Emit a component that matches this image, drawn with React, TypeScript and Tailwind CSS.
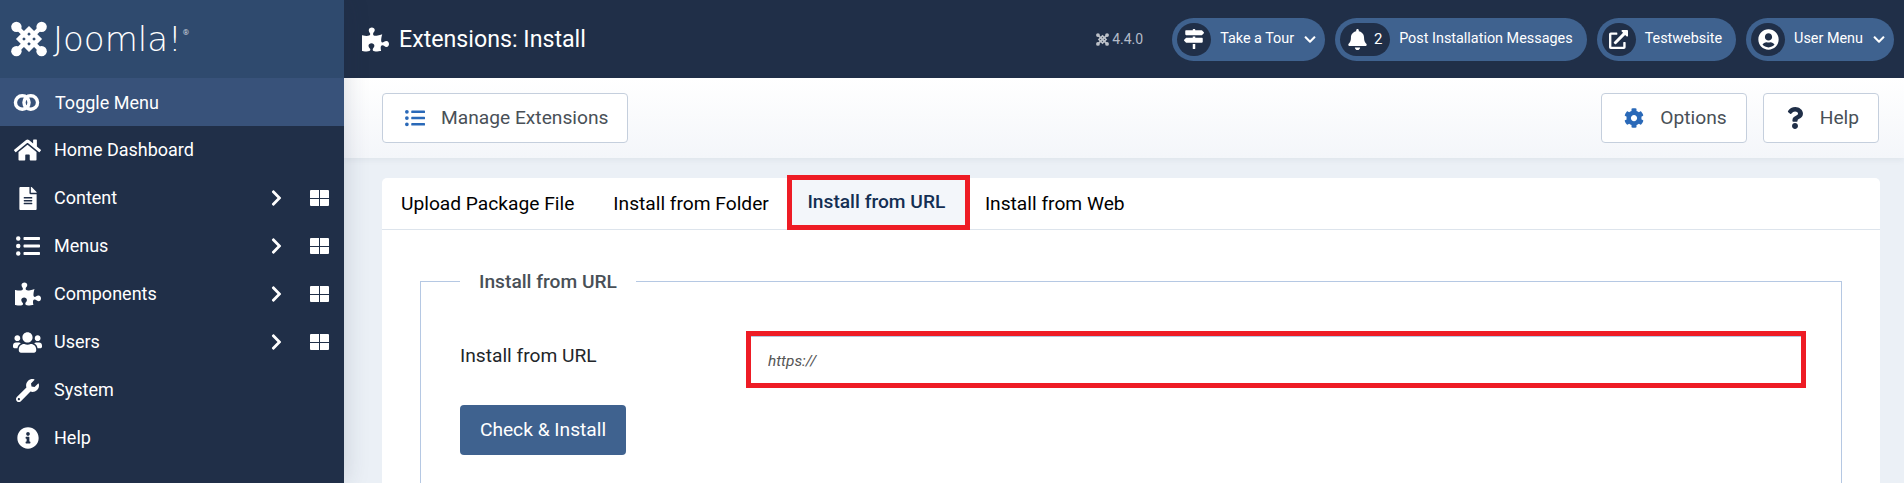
import { ReactNode } from "react";
import {
  FaBell,
  FaChevronDown,
  FaChevronRight,
  FaCog,
  FaExternalLinkAlt,
  FaFileAlt,
  FaHome,
  FaInfoCircle,
  FaListUl,
  FaMapSigns,
  FaPuzzlePiece,
  FaQuestion,
  FaUserCircle,
  FaUsers,
  FaWrench,
} from "react-icons/fa";

function JoomlaMark({ className }: { className?: string }) {
  return (
    <svg viewBox="0 0 40 40" className={className} fill="white">
      <circle cx="6" cy="6.5" r="5.8" />
      <circle cx="34" cy="6.5" r="5.8" />
      <circle cx="6" cy="33.5" r="5.8" />
      <circle cx="34" cy="33.5" r="5.8" />
      <g fill="none" stroke="white" strokeWidth="5">
        <path d="M20 9 L31 20 L20 31 L9 20 Z" />
        <path d="M6 6.5 L34 33.5" />
        <path d="M34 6.5 L6 33.5" />
      </g>
    </svg>
  );
}

function ToggleIcon() {
  return (
    <svg viewBox="0 0 28 18" className="w-[27px] h-[17px]" fill="none" stroke="white" strokeWidth="3.6">
      <circle cx="9.5" cy="9" r="7.2" />
      <circle cx="18.5" cy="9" r="7.2" />
    </svg>
  );
}

function GridIcon() {
  return (
    <span className="w-[19px] h-[16px] ml-[27px] mr-[15px] grid grid-cols-2 gap-px rounded-[1px] overflow-hidden">
      <span className="bg-white" />
      <span className="bg-white" />
      <span className="bg-white" />
      <span className="bg-white" />
    </span>
  );
}

const menu: { label: string; icon: ReactNode; more?: boolean }[] = [
  { label: "Home Dashboard", icon: <FaHome className="w-[27px] h-[24px]" /> },
  { label: "Content", icon: <FaFileAlt className="w-[18px] h-[23px]" />, more: true },
  { label: "Menus", icon: <FaListUl className="w-[24px] h-[24px]" />, more: true },
  { label: "Components", icon: <FaPuzzlePiece className="w-[26px] h-[26px]" />, more: true },
  { label: "Users", icon: <FaUsers className="w-[29px] h-[29px]" />, more: true },
  { label: "System", icon: <FaWrench className="w-[23px] h-[23px]" /> },
  { label: "Help", icon: <FaInfoCircle className="w-[22px] h-[22px]" /> },
];

function Sidebar() {
  return (
    <aside className="relative z-10 w-[344px] shrink-0 bg-[#202f48] text-white shadow-[0_0_24px_rgba(32,47,72,0.18)]">
      <div className="h-[78px] bg-[#2f4a6e] flex items-center pl-[11px]">
        <JoomlaMark className="w-[36px] h-[36px]" />
        <span className="ml-[6px] font-['DejaVu_Sans'] font-extralight text-[34px] leading-none">Joomla!</span>
        <span className="ml-[1px] text-[8px] self-start mt-[27px] text-gray-300">®</span>
      </div>
      <div className="h-[48px] bg-[#38527a] flex items-center pl-[13px] gap-[15px]">
        <ToggleIcon />
        <span className="text-[18px]">Toggle Menu</span>
      </div>
      {menu.map((item) => (
        <div key={item.label} className="h-[48px] flex items-center">
          <span className="w-[54px] flex justify-center pl-[1px]">{item.icon}</span>
          <span className="flex-1 text-[18px] -mt-[2px]">{item.label}</span>
          {item.more && (
            <>
              <FaChevronRight className="w-[13px] h-[18px]" />
              <GridIcon />
            </>
          )}
        </div>
      ))}
    </aside>
  );
}

function Pill({ icon, badge, label, caret }: { icon: ReactNode; badge?: string; label: string; caret?: boolean }) {
  return (
    <div className={`h-[43px] rounded-full bg-[#3f628f] flex items-center pl-[5px] text-white ${caret ? "pr-[8px]" : "pr-[14px]"}`}>
      <span className={`h-[33px] rounded-full bg-[#202f48] flex items-center justify-center ${badge ? "w-[50px] gap-[7px]" : "w-[34px]"}`}>
        {icon}
        {badge && <span className="text-[15px]">{badge}</span>}
      </span>
      <span className="ml-[9px] text-[14.4px]">{label}</span>
      {caret && <FaChevronDown className="ml-[9px] w-[14px] h-[13px]" />}
    </div>
  );
}

function Header() {
  return (
    <header className="h-[78px] bg-[#202f48] flex items-center pl-[18px] pr-[10px] text-white">
      <FaPuzzlePiece className="w-[27px] h-[27px]" />
      <h1 className="ml-[10px] text-[23.2px]">Extensions: Install</h1>
      <div className="ml-auto flex items-center gap-[10px]">
        <span className="mr-[19px] flex items-center gap-[3px] text-[14px] text-[#b4bcc8]">
          <JoomlaMark className="w-[13px] h-[13px] opacity-70" />
          4.4.0
        </span>
        <Pill icon={<FaMapSigns className="w-[20px] h-[20px]" />} label="Take a Tour" caret />
        <Pill icon={<FaBell className="w-[19px] h-[21px]" />} badge="2" label="Post Installation Messages" />
        <Pill icon={<FaExternalLinkAlt className="w-[19px] h-[19px]" />} label="Testwebsite" />
        <Pill icon={<FaUserCircle className="w-[21px] h-[21px]" />} label="User Menu" caret />
      </div>
    </header>
  );
}

function ToolButton({ icon, label }: { icon: ReactNode; label: string }) {
  return (
    <button className="h-[50px] pl-[22px] pr-[19px] bg-white border border-[#c5cfdd] rounded-[4px] flex items-center gap-[16px] text-[19.2px] text-[#495057]">
      {icon}
      {label}
    </button>
  );
}

function Toolbar() {
  return (
    <div className="h-[80px] bg-gradient-to-b from-white to-[#f4f6fa] shadow-[0_2px_6px_rgba(32,47,72,0.06)] flex items-center justify-between pl-[38px] pr-[25px]">
      <ToolButton icon={<FaListUl className="w-[20px] h-[20px] text-[#2a69b8]" />} label="Manage Extensions" />
      <div className="flex gap-[16px]">
        <ToolButton icon={<FaCog className="w-[20px] h-[20px] text-[#2a69b8]" />} label="Options" />
        <ToolButton icon={<FaQuestion className="w-[18px] h-[22px] text-[#202f48]" />} label="Help" />
      </div>
    </div>
  );
}

function Tabs() {
  return (
    <div className="h-[52px] border-b border-[#dde4ec] flex text-[19.2px] text-black">
      <div className="px-[19px] pt-[12px]">Upload Package File</div>
      <div className="pl-[20px] pr-[18px] pt-[12px]">Install from Folder</div>
      <div className="-mt-[3px] h-[55px] w-[183px] border-[5px] border-[#ee1c25] bg-[#f3f6fa] flex items-center justify-center pr-[4px] font-medium text-[#132f53]">
        Install from URL
      </div>
      <div className="pl-[15px] pt-[12px]">Install from Web</div>
    </div>
  );
}

export default function App() {
  return (
    <div className="h-screen overflow-hidden flex bg-[#ebf0f6] font-['Roboto',sans-serif]">
      <Sidebar />
      <main className="flex-1 min-w-0">
        <Header />
        <Toolbar />
        <div className="pt-[20px] pl-[38px] pr-[24px]">
          <section className="bg-white rounded-t-[5px] h-[400px]">
            <Tabs />
            <fieldset className="mt-[39px] mx-[38px] border border-[#b5c8e3] pl-[39px] pr-[35px] h-[300px]">
              <legend className="px-[19px] text-[19.2px] leading-[24px] font-medium text-[#495057]">
                <span className="block translate-y-px">Install from URL</span>
              </legend>
              <div className="mt-[38px] flex items-center">
                <label className="w-[286px] text-[19.2px] text-[#22262a] -mt-[7px]">Install from URL</label>
                <input
                  placeholder="https://"
                  className="flex-1 h-[57px] border-[5px] border-[#ee1c25] pl-[17px] text-[15.4px] pt-[2px] shadow-[inset_0_1px_0_#b5c8e3] placeholder:italic placeholder:text-[#555] outline-none"
                />
              </div>
              <button className="mt-[17px] w-[166px] h-[50px] rounded-[4px] bg-[#3f628f] text-white text-[19.2px]">Check &amp; Install</button>
            </fieldset>
          </section>
        </div>
      </main>
    </div>
  );
}
